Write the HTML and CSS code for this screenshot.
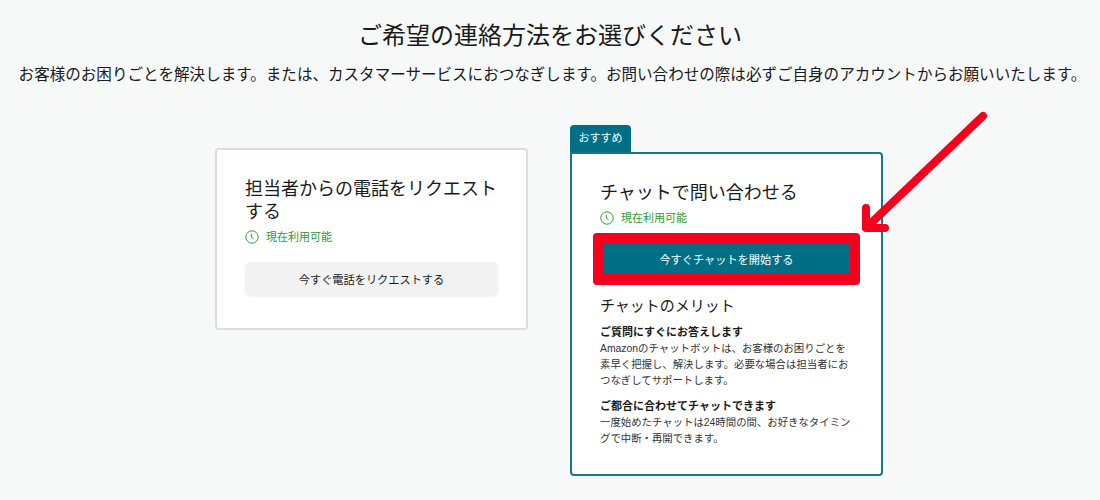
FILE: index.html
```html
<!DOCTYPE html>
<html lang="ja">
<head>
    <meta charset="UTF-8">
    <title>ご希望の連絡方法をお選びください</title>
    <link rel="stylesheet" href="styles.css">
</head>
<body>
    <div class="page">
        <h1 class="page-title">ご希望の連絡方法をお選びください</h1>
        <p class="page-lead">お客様のお困りごとを解決します。または、カスタマーサービスにおつなぎします。お問い合わせの際は必ずご自身のアカウントからお願いいたします。</p>
        <div class="options">
            <div class="card card-phone">
                <h2 class="card-title">担当者からの電話をリクエストする</h2>
                <div class="status">
                    <svg class="status-icon" viewBox="0 0 14 14"><circle cx="7" cy="7" r="6.2"/><path d="M6.2 3.8 L6.6 7 L8.4 9"/></svg>
                    <span>現在利用可能</span>
                </div>
                <button class="btn btn-gray">今すぐ電話をリクエストする</button>
            </div>
            <div class="recommend">
                <div class="tab">おすすめ</div>
                <div class="card card-chat">
                    <h2 class="card-title">チャットで問い合わせる</h2>
                    <div class="status">
                        <svg class="status-icon" viewBox="0 0 14 14"><circle cx="7" cy="7" r="6.2"/><path d="M6.2 3.8 L6.6 7 L8.4 9"/></svg>
                        <span>現在利用可能</span>
                    </div>
                    <div class="highlight">
                        <button class="btn btn-teal">今すぐチャットを開始する</button>
                    </div>
                    <h3 class="merit-title">チャットのメリット</h3>
                    <h4 class="merit-head">ご質問にすぐにお答えします</h4>
                    <p class="merit-text">Amazonのチャットボットは、お客様のお困りごとを素早く把握し、解決します。必要な場合は担当者におつなぎしてサポートします。</p>
                    <h4 class="merit-head merit-second">ご都合に合わせてチャットできます</h4>
                    <p class="merit-text">一度始めたチャットは24時間の間、お好きなタイミングで中断・再開できます。</p>
                </div>
            </div>
        </div>
        <svg class="arrow" viewBox="0 0 140 130"><path d="M127 10 L10 122 M10 122 L10 102 M10 122 L29 122"/></svg>
    </div>
</body>
</html>
```
FILE: styles.css
```css
body {
    margin: 0;
    padding: 0;
    background-color: #f7f9f9;
    color: #1a1a1a;
    font-family: "Liberation Sans", "Noto Sans CJK JP", sans-serif;
}

.page {
    position: relative;
    width: 1100px;
    height: 500px;
    overflow: hidden;
}

.page-title {
    margin: 0;
    padding-top: 20px;
    font-size: 24px;
    line-height: 32px;
    font-weight: 400;
    text-align: center;
}

.page-lead {
    margin: 7px 0 0;
    padding-left: 5px;
    font-size: 15.55px;
    line-height: 32px;
    text-align: center;
    white-space: nowrap;
}

.options {
    display: flex;
    align-items: flex-start;
    justify-content: center;
    gap: 42px;
    margin-top: 34px;
    padding-right: 2px;
}

.card {
    box-sizing: border-box;
    width: 313px;
    background-color: #ffffff;
    border-radius: 4px;
    padding: 28px 26px 28px 28px;
}

.card-phone {
    height: 182px;
    margin-top: 23px;
    border: 2px solid #dddddd;
}

.card-chat {
    height: 324px;
    border: 2px solid #16788a;
    border-top-left-radius: 0;
}

.tab {
    box-sizing: border-box;
    width: 61px;
    height: 27px;
    background-color: #006f85;
    color: #ffffff;
    font-size: 11px;
    line-height: 26px;
    text-align: center;
    border-radius: 4px 4px 0 0;
}

.card-title {
    margin: 0;
    font-size: 18px;
    line-height: 23px;
    font-weight: 400;
}

.status {
    display: flex;
    align-items: center;
    gap: 7px;
    margin-top: 5px;
    font-size: 11px;
    line-height: 16px;
    color: #2f9a3a;
}

.status-icon {
    width: 14px;
    height: 14px;
    fill: none;
    stroke: #2f9a3a;
    stroke-width: 1;
}

.btn {
    display: block;
    width: 100%;
    border: none;
    font-family: inherit;
    font-size: 11.2px;
}

.btn-gray {
    width: 253px;
    height: 34px;
    margin-top: 17px;
    background-color: #f2f2f2;
    color: #1a1a1a;
    border-radius: 6px;
    box-shadow: 0 1px 3px rgba(0, 0, 0, 0.06);
}

.highlight {
    box-sizing: border-box;
    width: 267px;
    height: 52px;
    margin: 7px 0 0 -7px;
    padding: 10px;
    background-color: #f5001d;
    border-radius: 4px;
}

.btn-teal {
    height: 31px;
    background-color: #006f85;
    color: #ffffff;
}

.merit-title {
    margin: 11px 0 0;
    font-size: 15px;
    line-height: 20px;
    font-weight: 400;
}

.merit-head {
    margin: 8px 0 0;
    font-size: 11px;
    line-height: 16px;
    font-weight: 700;
}

.merit-second {
    margin-top: 9px;
}

.merit-text {
    margin: 1px 0 0;
    font-size: 10.4px;
    line-height: 16px;
    color: #333333;
}

.arrow {
    position: absolute;
    left: 856px;
    top: 106px;
    width: 140px;
    height: 130px;
    fill: none;
    stroke: #f5001d;
    stroke-width: 8;
    stroke-linecap: round;
    stroke-linejoin: round;
}
```
